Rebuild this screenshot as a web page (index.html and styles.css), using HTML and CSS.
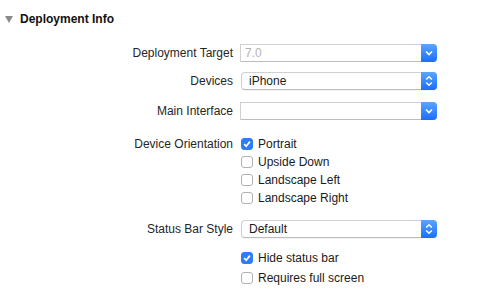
FILE: index.html
```html
<!DOCTYPE html>
<html>
<head>
<meta charset="utf-8">
<link rel="stylesheet" href="styles.css">
</head>
<body>
<div class="panel">
  <div class="header">
    <svg class="disclosure" width="8" height="7" viewBox="0 0 8 7"><path d="M0 0 H8 L4 7 Z" fill="#8a8a8a"/></svg>
    <span class="title">Deployment Info</span>
  </div>
  <div class="form">
    <div class="label r-target">Deployment Target</div>
    <div class="control r-target">
      <div class="combo">
        <span class="value disabled">7.0</span>
        <span class="btn"><svg width="8" height="6" viewBox="0 0 8 6"><path d="M1 1.5 L4 4.5 L7 1.5" fill="none" stroke="#fff" stroke-width="1.6"/></svg></span>
      </div>
    </div>

    <div class="label r-devices">Devices</div>
    <div class="control r-devices">
      <div class="popup">
        <span class="value pv">iPhone</span>
        <span class="btn"><svg width="8" height="12" viewBox="0 0 8 12"><path d="M1.2 4.5 L4 1.7 L6.8 4.5 M1.2 7.5 L4 10.3 L6.8 7.5" fill="none" stroke="#fff" stroke-width="1.5"/></svg></span>
      </div>
    </div>

    <div class="label r-main">Main Interface</div>
    <div class="control r-main">
      <div class="combo">
        <span class="value"></span>
        <span class="btn"><svg width="8" height="6" viewBox="0 0 8 6"><path d="M1 1.5 L4 4.5 L7 1.5" fill="none" stroke="#fff" stroke-width="1.6"/></svg></span>
      </div>
    </div>

    <div class="label r-orient">Device Orientation</div>
    <div class="control r-orient checks">
      <label class="check"><span class="box on"><svg width="10" height="10" viewBox="0 0 10 10"><path d="M2.2 5.2 L4.2 7.3 L7.9 2.6" fill="none" stroke="#fff" stroke-width="1.7"/></svg></span>Portrait</label>
      <label class="check"><span class="box"></span>Upside Down</label>
      <label class="check"><span class="box"></span>Landscape Left</label>
      <label class="check"><span class="box"></span>Landscape Right</label>
    </div>

    <div class="label r-status">Status Bar Style</div>
    <div class="control r-status">
      <div class="popup">
        <span class="value pv">Default</span>
        <span class="btn"><svg width="8" height="12" viewBox="0 0 8 12"><path d="M1.2 4.5 L4 1.7 L6.8 4.5 M1.2 7.5 L4 10.3 L6.8 7.5" fill="none" stroke="#fff" stroke-width="1.5"/></svg></span>
      </div>
    </div>

    <div class="label r-extra"></div>
    <div class="control r-extra checks">
      <label class="check"><span class="box on"><svg width="10" height="10" viewBox="0 0 10 10"><path d="M2.2 5.2 L4.2 7.3 L7.9 2.6" fill="none" stroke="#fff" stroke-width="1.7"/></svg></span>Hide status bar</label>
      <label class="check check-spaced"><span class="box"></span>Requires full screen</label>
    </div>
  </div>
</div>
</body>
</html>
```
FILE: styles.css
```css
html, body {
  margin: 0;
  padding: 0;
  background: #ffffff;
}
body {
  font-family: "Liberation Sans", Arial, sans-serif;
  font-size: 12px;
  color: #1a1a1a;
  width: 500px;
  height: 296px;
  overflow: hidden;
}
.header {
  display: flex;
  align-items: center;
  height: 14px;
  padding-top: 12px;
  padding-left: 5px;
}
.disclosure {
  margin-right: 7px;
}
.title {
  font-weight: bold;
  font-size: 12px;
  color: #111;
}
.form {
  display: grid;
  grid-template-columns: 233px 197px;
  column-gap: 7px;
  margin-top: 18px;
}
.label {
  text-align: right;
  line-height: 18px;
  height: 18px;
  color: #262626;
}
.r-devices { margin-top: 10px; }
.r-main { margin-top: 12px; }
.r-orient { margin-top: 15px; }
.r-status { margin-top: 13px; }
.r-extra { margin-top: 11px; }
.control {
  min-height: 18px;
}
.combo, .popup {
  display: flex;
  height: 18px;
  box-sizing: border-box;
  background: #fff;
  border: 1px solid #d0d0d0;
  border-bottom-color: #bcbcbc;
  border-right: none;
}
.combo {
  border-radius: 0 4px 4px 0;
}
.popup {
  border-radius: 4px;
  margin-left: 1px;
  box-shadow: 0 0.5px 0.5px rgba(0,0,0,0.08);
}
.value {
  flex: 1;
  line-height: 16px;
  padding-left: 4px;
  color: #1a1a1a;
}
.value.pv {
  padding-left: 7px;
}
.value.disabled {
  color: #b4b4b4;
}
.btn {
  width: 16px;
  margin: -1px 0 -1px 0;
  border-radius: 0 4px 4px 0;
  background: linear-gradient(#59a6ff, #1d6cff);
  display: flex;
  align-items: center;
  justify-content: center;
}
.checks {
  display: flex;
  flex-direction: column;
}
.check {
  display: flex;
  align-items: center;
  height: 18px;
  color: #1a1a1a;
}
.check-spaced {
  margin-top: 2px;
}
.box {
  width: 12px;
  height: 12px;
  box-sizing: border-box;
  border: 1px solid #b2b2b2;
  border-radius: 3px;
  background: #fff;
  margin-left: 1px;
  margin-right: 5px;
  display: flex;
  align-items: center;
  justify-content: center;
}
.box.on {
  background: #2f7df6;
  border-color: #2f7df6;
}
```
